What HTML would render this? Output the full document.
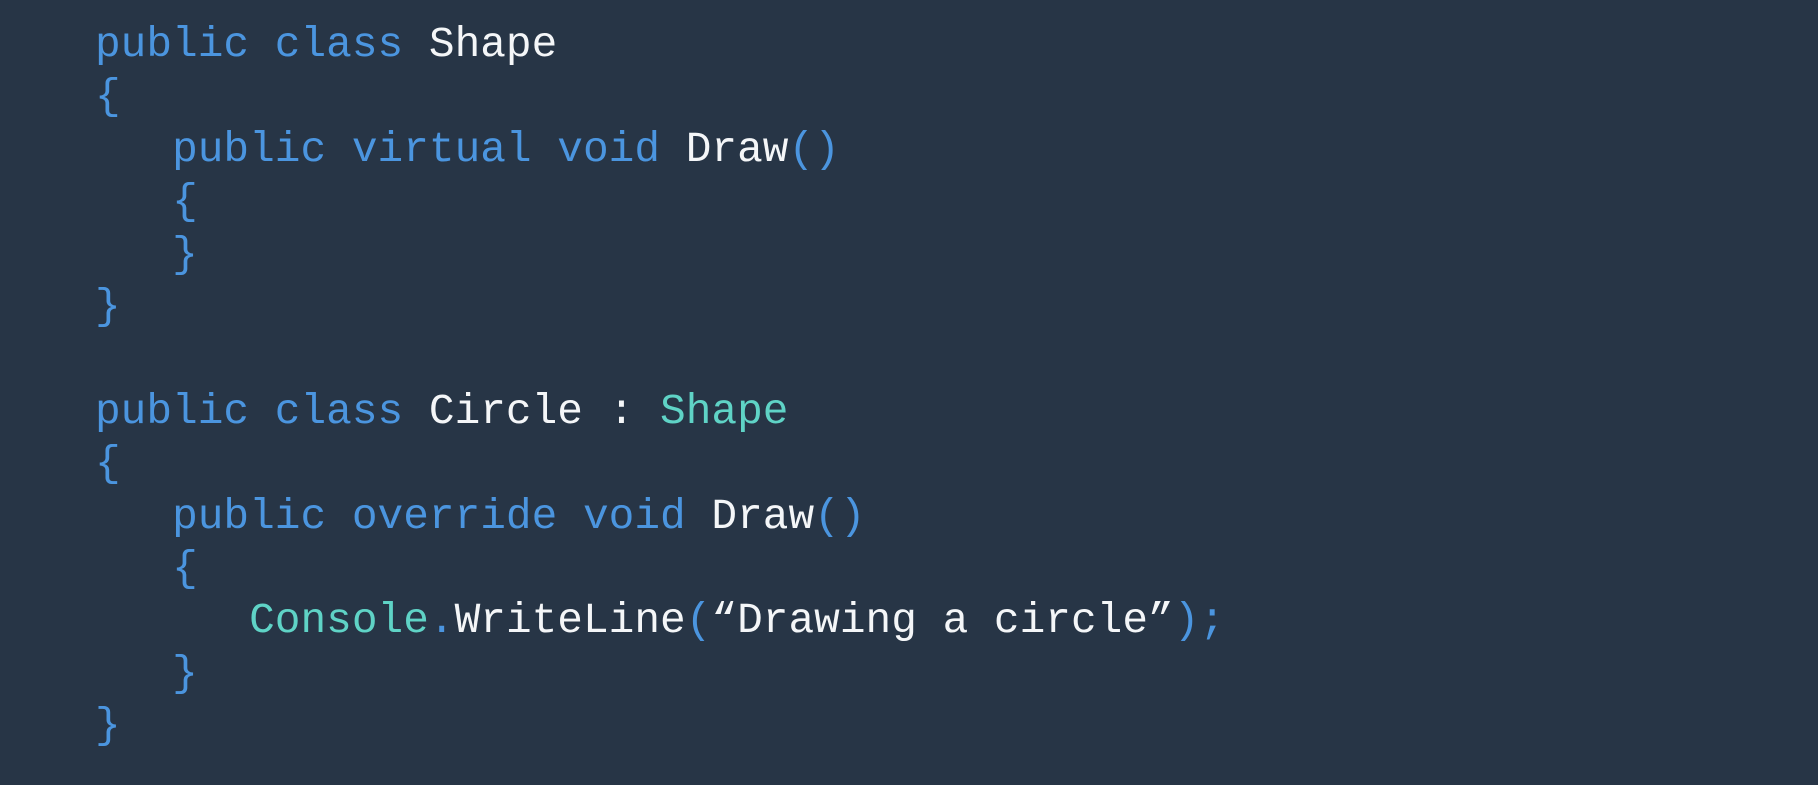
<!DOCTYPE html>
<html><head><style>
html,body{margin:0;padding:0;width:1818px;height:785px;background:#273546;overflow:hidden}
pre{position:absolute;left:95px;top:19px;margin:0;font-family:"Liberation Mono",monospace;font-size:42.8px;line-height:52.4px;color:#f4f6f8}
.k{color:#4b95df}.t{color:#5fd3c6}
</style></head><body>
<pre><span class="k">public class</span> Shape
<span class="k">{</span>
   <span class="k">public virtual void</span> Draw<span class="k">()</span>
   <span class="k">{</span>
   <span class="k">}</span>
<span class="k">}</span>

<span class="k">public class</span> Circle : <span class="t">Shape</span>
<span class="k">{</span>
   <span class="k">public override void</span> Draw<span class="k">()</span>
   <span class="k">{</span>
      <span class="t">Console</span><span class="k">.</span>WriteLine<span class="k">(</span>“Drawing a circle”<span class="k">);</span>
   <span class="k">}</span>
<span class="k">}</span></pre>
</body></html>
